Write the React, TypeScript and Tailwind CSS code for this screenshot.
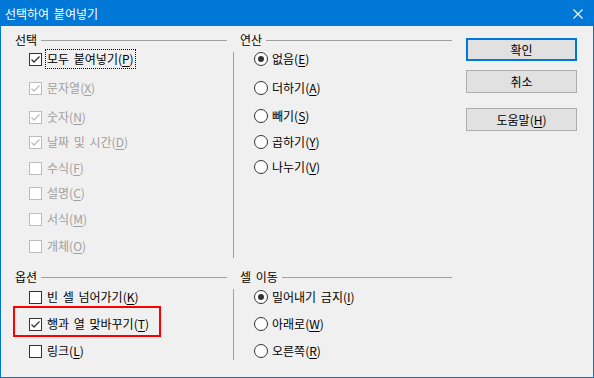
import React from 'react';

const font = { fontFamily: '"Noto Sans CJK KR", "Noto Sans", sans-serif' };

type Opt = { text: string; key: string; mt: string; checked?: boolean; disabled?: boolean; focus?: boolean };

const selectRows: Opt[] = [
  { text: '모두 붙여넣기', key: 'P', mt: 'mt-0', checked: true, focus: true },
  { text: '문자열', key: 'X', mt: 'mt-[9px]', checked: true, disabled: true },
  { text: '숫자', key: 'N', mt: 'mt-[9px]', checked: true, disabled: true },
  { text: '날짜 및 시간', key: 'D', mt: 'mt-[5px]', checked: true, disabled: true },
  { text: '수식', key: 'F', mt: 'mt-[6px]', disabled: true },
  { text: '설명', key: 'C', mt: 'mt-[5px]', disabled: true },
  { text: '서식', key: 'M', mt: 'mt-[6px]', disabled: true },
  { text: '개체', key: 'O', mt: 'mt-[7px]', disabled: true },
];

const opRows: Opt[] = [
  { text: '없음', key: 'E', mt: 'mt-0', checked: true },
  { text: '더하기', key: 'A', mt: 'mt-[9px]' },
  { text: '빼기', key: 'S', mt: 'mt-[8px]' },
  { text: '곱하기', key: 'Y', mt: 'mt-[6px]' },
  { text: '나누기', key: 'V', mt: 'mt-[5px]' },
];

const optionRows: Opt[] = [
  { text: '빈 셀 넘어가기', key: 'K', mt: 'mt-px' },
  { text: '행과 열 맞바꾸기', key: 'T', mt: 'mt-[7px]', checked: true },
  { text: '링크', key: 'L', mt: 'mt-[7px]' },
];

const moveRows: Opt[] = [
  { text: '밀어내기 금지', key: 'I', mt: 'mt-px', checked: true },
  { text: '아래로', key: 'W', mt: 'mt-[7px]' },
  { text: '오른쪽', key: 'R', mt: 'mt-[7px]' },
];

function Label({ text, k }: { text: string; k: string }) {
  return (
    <span className="whitespace-pre [word-spacing:2px]">
      {text}(<span className="underline underline-offset-2">{k}</span>)
    </span>
  );
}

function CheckBox({ checked, disabled }: { checked?: boolean; disabled?: boolean }) {
  return (
    <div
      className={
        'w-[13px] h-[13px] shrink-0 border ' +
        (disabled ? 'border-[#bcbcbc] bg-white' : 'border-[#333333] bg-white')
      }
    >
      {checked && (
        <svg width="11" height="11" viewBox="0 0 11 11">
          <polyline
            points="1.5,5.5 4,8 9.5,2.5"
            fill="none"
            stroke={disabled ? '#bcbcbc' : '#333333'}
            strokeWidth="1.3"
          />
        </svg>
      )}
    </div>
  );
}

function Radio({ checked }: { checked?: boolean }) {
  return (
    <div className="w-[14px] h-[14px] shrink-0 rounded-full border border-[#333333] bg-white flex items-center justify-center">
      {checked && <div className="w-[6px] h-[6px] rounded-full bg-[#333333]" />}
    </div>
  );
}

function Header({ title, pad }: { title: string; pad: string }) {
  return (
    <div className={'h-[18px] flex items-center ' + pad}>
      <span className="text-[12px] leading-none text-black whitespace-pre [word-spacing:2px]">{title}</span>
      <div className="flex-1 h-px bg-[#a0a0a0] ml-[4px]" />
    </div>
  );
}

function CheckRow({ o }: { o: Opt }) {
  return (
    <div className={'h-[20px] flex items-center gap-[3px] ' + o.mt}>
      <CheckBox checked={o.checked} disabled={o.disabled} />
      <div
        className={
          'text-[12px] leading-none px-[1px] py-[3px] border ' +
          (o.focus ? 'border-dotted border-black' : 'border-transparent') +
          (o.disabled ? ' text-[#a0a0a0]' : ' text-black')
        }
      >
        <Label text={o.text} k={o.key} />
      </div>
    </div>
  );
}

function RadioRow({ o }: { o: Opt }) {
  return (
    <div className={'h-[20px] flex items-center gap-[4px] ' + o.mt}>
      <Radio checked={o.checked} />
      <div className="text-[12px] leading-none text-black">
        <Label text={o.text} k={o.key} />
      </div>
    </div>
  );
}

function Button({ text, def }: { text: React.ReactNode; def?: boolean }) {
  return (
    <div
      className={
        'w-[111px] h-[23px] flex items-center justify-center bg-[#e1e1e1] text-[12px] leading-none text-black ' +
        (def ? 'border-2 border-[#0078d7]' : 'border border-[#adadad]')
      }
    >
      {text}
    </div>
  );
}

export default function App() {
  return (
    <div className="w-[594px] h-[378px] bg-[#f0f0f0] border border-[#0078d7] flex flex-col" style={font}>
      <div className="h-[25px] bg-[#0078d7] flex items-center justify-between shrink-0">
        <span className="pl-[4px] text-[12px] leading-none text-white whitespace-pre [word-spacing:2px]">선택하여 붙여넣기</span>
        <svg width="10" height="10" viewBox="0 0 10 10" className="mr-[10px]">
          <path d="M0.5 0.5 L9.5 9.5 M9.5 0.5 L0.5 9.5" stroke="white" strokeWidth="1.1" />
        </svg>
      </div>

      <div className="relative flex flex-1">
        <div className="w-[452px] pl-[14px] flex flex-col">
          {/* top section */}
          <div className="h-[237px] pt-[5px] grid grid-cols-[218px_219px]">
            <div className="flex flex-col">
              <Header title="선택" pad="pr-[6px]" />
              <div className="flex flex-col pl-[14px]">
                {selectRows.map((o) => (
                  <CheckRow key={o.key} o={o} />
                ))}
              </div>
            </div>
            <div className="flex flex-col">
              <Header title="연산" pad="pl-[7px]" />
              <div className="flex items-start">
                <div className="w-px h-[206px] mt-[3px] bg-[#a0a0a0]" />
                <div className="flex flex-col pl-[20px]">
                  {opRows.map((o) => (
                    <RadioRow key={o.key} o={o} />
                  ))}
                </div>
              </div>
            </div>
          </div>

          {/* bottom section */}
          <div className="pt-[5px] grid grid-cols-[218px_219px]">
            <div className="flex flex-col">
              <Header title="옵션" pad="pr-[6px]" />
              <div className="flex flex-col pl-[14px]">
                {optionRows.map((o) => (
                  <CheckRow key={o.key} o={o} />
                ))}
              </div>
            </div>
            <div className="flex flex-col">
              <Header title="셀 이동" pad="pl-[7px]" />
              <div className="flex items-start">
                <div className="w-px h-[71px] mt-[3px] bg-[#a0a0a0]" />
                <div className="flex flex-col pl-[20px]">
                  {moveRows.map((o) => (
                    <RadioRow key={o.key} o={o} />
                  ))}
                </div>
              </div>
            </div>
          </div>
        </div>

        <div className="ml-[13px] pt-[12px] flex flex-col">
          <Button text="확인" def />
          <div className="mt-[9px]">
            <Button text="취소" />
          </div>
          <div className="mt-[15px]">
            <Button text={<Label text="도움말" k="H" />} />
          </div>
        </div>

        {/* red annotation box */}
        <div className="absolute left-[12px] top-[280px] w-[148px] h-[31px] border-2 border-[#ff0000]" />
      </div>
    </div>
  );
}
